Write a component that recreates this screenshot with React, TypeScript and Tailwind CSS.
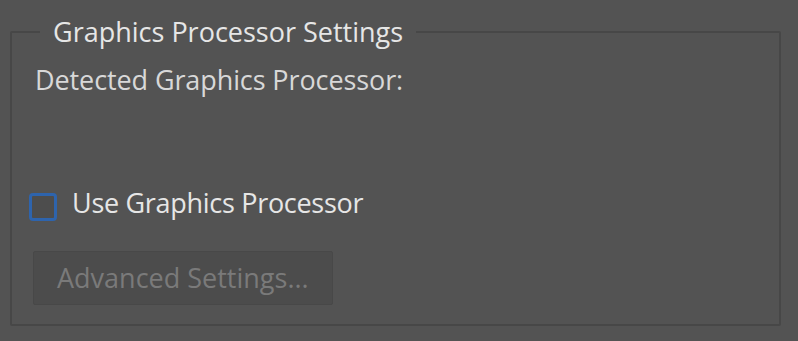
import React from "react";

export default function App() {
  return (
    <div
      className="w-[798px] h-[341px] bg-[#535353] pt-[18px] pl-[10px] pr-[17px]"
      style={{ fontFamily: '"Open Sans", sans-serif' }}
    >
      <fieldset className="border-2 border-[#474747] rounded-[2px] h-[308px] pl-[23px] pr-[20px] m-0">
        <legend className="ml-[5px] px-[13px] text-[27px] leading-[28px] text-[#e6e6e6]">
          Graphics Processor Settings
        </legend>
        <div className="text-[27px] leading-[30px] text-[#d8d8d8] mt-[19px] tracking-[-0.1px]">
          Detected Graphics Processor:
        </div>
        <label className="flex items-start gap-[15px] mt-[93px] text-[27px] leading-[30px] text-[#e6e6e6]">
          <span className="ml-[-6px] mt-[5px] w-[28px] h-[28px] rounded-[4px] border-[3px] border-[#2e64ad] bg-[#4d4d4d]" />
          <span className="tracking-[-0.3px]">Use Graphics Processor</span>
        </label>
        <button className="mt-[30px] ml-[-2px] w-[300px] h-[54px] bg-[#4c4c4c] border border-[#484848] rounded-[2px] text-left pl-[23px] text-[27px] leading-[30px] text-[#7a7a7a]">
          Advanced Settings...
        </button>
      </fieldset>
    </div>
  );
}
